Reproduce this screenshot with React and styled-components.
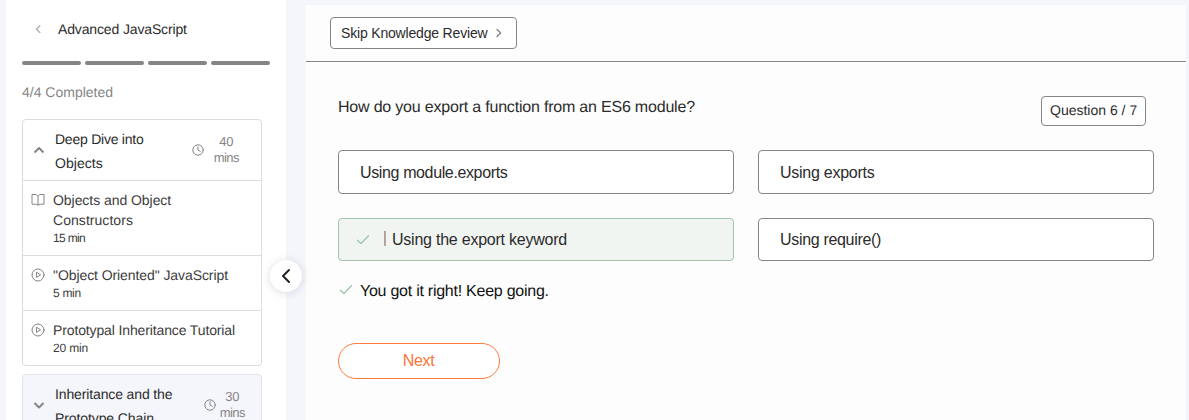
import React from "react";
import styled, { createGlobalStyle, css } from "styled-components";

const GlobalStyle = createGlobalStyle`
  * { box-sizing: border-box; }
  html, body { margin: 0; height: 420px; overflow: hidden; }
  body {
    background: #f5f6fc;
    color: #2b2b2b;
    font-family: "Liberation Sans", Arial, sans-serif;
    text-rendering: geometricPrecision;
  }
  button { font: inherit; color: inherit; cursor: pointer; }
`;

const Page = styled.div`
  display: flex;
  height: 420px;
  padding: 0 3px 0 6px;
  overflow: hidden;
`;

const Sidebar = styled.aside`
  position: relative;
  flex: 0 0 280px;
  height: 420px;
  padding: 0 16px;
  background: #fff;
`;

const Label = styled.span`
  display: block;
  white-space: nowrap;
  letter-spacing: ${(p) => p.$track || 0}px;
`;

const CourseHeader = styled.header`
  display: flex;
  align-items: center;
  height: 61px;
  padding: 0 0 3px 12px;
  gap: 16px;
  font-size: 14px;
`;

const Progress = styled.div`
  display: grid;
  grid-template-columns: repeat(4, 1fr);
  gap: 4px;
`;

const Segment = styled.div`
  height: 4px;
  border-radius: 2px;
  background: #858585;
`;

const Completed = styled.div`
  height: 54px;
  padding-top: 17px;
  font-size: 14px;
  line-height: 20px;
  color: #858585;
`;

const Module = styled.section`
  width: 240px;
  margin-bottom: 8px;
  border: 1px solid ${(p) => (p.$collapsed ? "#e2e3ea" : "#dcdcdf")};
  border-radius: 4px;
  background: ${(p) => (p.$collapsed ? "#f5f6fc" : "#fff")};
`;

const ModuleHeader = styled.div`
  display: flex;
  align-items: center;
  height: 60px;
  padding: 0 ${(p) => p.$right}px 0 10px;
`;

const ModuleTitle = styled.div`
  flex: 1;
  margin-left: 10px;
  padding-top: 2px;
  font-size: 14px;
  line-height: 24px;
`;

const Duration = styled.div`
  display: flex;
  align-items: center;
  gap: ${(p) => p.$gap}px;
  color: #858585;
  font-size: 13px;
  line-height: 16px;
  text-align: center;
`;

const Lesson = styled.div`
  display: flex;
  gap: 8px;
  height: ${(p) => (p.$tall ? 75 : 55)}px;
  padding: 9px 8px 0;
  border-top: 1px solid #dcdcdf;
  font-size: 14px;
  line-height: 20px;
  color: #3c3c3c;
  svg { flex: none; margin-top: 3px; }
`;

const LessonTime = styled(Label)`
  font-size: 12px;
  line-height: 16px;
`;

const CollapseButton = styled.button`
  position: absolute;
  top: 260px;
  left: 264px;
  z-index: 1;
  display: grid;
  place-items: center;
  width: 32px;
  height: 32px;
  padding: 0;
  border: 0;
  border-radius: 50%;
  background: #fff;
  box-shadow: 0 1px 8px rgba(40, 40, 70, 0.16);
`;

const Main = styled.main`
  flex: 1;
  height: 415px;
  margin: 5px 0 0 20px;
  background: #fdfdfd;
`;

const Toolbar = styled.div`
  height: 57px;
  padding: 12px 24px;
  border-bottom: 1px solid #858585;
`;

const SkipButton = styled.button`
  display: flex;
  align-items: center;
  gap: 8px;
  width: 187px;
  height: 32px;
  padding: 0 0 0 10px;
  border: 1px solid #858585;
  border-radius: 4px;
  background: #fff;
  font-size: 14px;
`;

const Quiz = styled.div`
  padding: 34px 32px 0;
`;

const QuestionRow = styled.div`
  display: flex;
  justify-content: space-between;
  align-items: flex-start;
  height: 54px;
  padding-right: 8px;
  font-size: 16px;
  line-height: 24px;
`;

const Counter = styled.div`
  width: 105px;
  height: 30px;
  padding-left: 8px;
  border: 1px solid #858585;
  border-radius: 4px;
  background: #fff;
  font-size: 14px;
  line-height: 27px;
`;

const Answers = styled.div`
  display: grid;
  grid-template-columns: 396px 396px;
  grid-template-rows: 44px 43px;
  gap: 24px;
`;

const Answer = styled.button`
  display: flex;
  align-items: center;
  padding: 1px 21px 0;
  border: 1px solid #858585;
  border-radius: 4px;
  background: #fff;
  font-size: 16px;
  ${(p) =>
    p.$correct &&
    css`
      padding: 0 17px;
      border-color: #a0c3ac;
      background: #f1f5f2;
    `}
`;

const Caret = styled.span`
  width: 2px;
  height: 15px;
  margin: 0 6px 2px 14px;
  background: linear-gradient(90deg, #c99b86 50%, #a5aebd 50%);
`;

const Feedback = styled.div`
  display: flex;
  align-items: center;
  gap: 7px;
  height: 22px;
  margin: 18px 0 42px 1px;
  font-size: 16px;
  color: #111;
  span { padding-top: 3px; }
`;

const NextButton = styled.button`
  display: flex;
  align-items: center;
  justify-content: center;
  width: 162px;
  height: 36px;
  padding: 0 1px 0 0;
  border: 1px solid #ff7a3d;
  border-radius: 18px;
  background: #fff;
  color: #ff7438;
  font-size: 16px;
`;

const Svg = ({ w, h = w, color = "#858585", stroke = 1, children }) => (
  <svg
    width={w}
    height={h}
    viewBox={`0 0 ${w} ${h}`}
    fill="none"
    stroke={color}
    strokeWidth={stroke}
    strokeLinecap="round"
    strokeLinejoin="round"
  >
    {children}
  </svg>
);

const BackIcon = () => (
  <Svg w={8} color="#aaa" stroke={1.2}><path d="M6 .8 2.4 4.3 6 7.8" /></Svg>
);
const ToggleIcon = ({ open }) => (
  <Svg w={12} stroke={2}>
    <path strokeLinecap="butt" d={open ? "M1.5 8.5 6 4 10.5 8.5" : "M1.5 4 6 8.5 10.5 4"} />
  </Svg>
);
const ClockIcon = () => (
  <Svg w={12}>
    <circle cx="6" cy="6" r="5.2" />
    <path d="M6 2.8V6l2.2 1.3" />
  </Svg>
);
const BookIcon = () => (
  <Svg w={14}>
    <path d="M7 3.2C6.4 2 5.3 1.5 4 1.5H1v9.7h3.4c1.3 0 2.2.4 2.6 1.2.4-.8 1.3-1.2 2.6-1.2H13V1.5h-3C8.7 1.5 7.6 2 7 3.2V12" />
  </Svg>
);
const PlayIcon = () => (
  <Svg w={14}>
    <circle cx="7" cy="7" r="6" />
    <path d="M5.5 4.6v4.8L9.3 7z" />
  </Svg>
);
const CheckIcon = () => (
  <Svg w={14} color="#a5c5b0" stroke={1.4}><path d="M1.5 7.3 5 10.6 12.5 2.8" /></Svg>
);

const modules = [
  {
    title: [["Deep Dive into", -0.24], ["Objects", 0.05]],
    mins: "40",
    right: 22,
    gap: 10,
    lessons: [
      { icon: BookIcon, title: [["Objects and Object", -0.05], ["Constructors", 0.05]], time: ["15 min", -0.65] },
      { icon: PlayIcon, title: [['"Object Oriented" JavaScript', -0.08]], time: ["5 min", -0.3] },
      { icon: PlayIcon, title: [["Prototypal Inheritance Tutorial", -0.13]], time: ["20 min", -0.15] },
    ],
  },
  {
    title: [["Inheritance and the", -0.13], ["Prototype Chain", -0.1]],
    mins: "30",
    right: 16,
    gap: 4,
  },
];

const answers = [
  { text: "Using module.exports", track: -0.37 },
  { text: "Using exports", track: -0.26 },
  { text: "Using the export keyword", track: -0.23, correct: true },
  { text: "Using require()", track: -0.32 },
];

export default function App() {
  return (
    <>
      <GlobalStyle />
      <Page>
        <Sidebar>
          <CourseHeader>
            <BackIcon />
            <Label $track={-0.14}>Advanced JavaScript</Label>
          </CourseHeader>
          <Progress>
            {[0, 1, 2, 3].map((n) => <Segment key={n} />)}
          </Progress>
          <Completed><Label>4/4 Completed</Label></Completed>
          {modules.map((m) => (
            <Module key={m.mins} $collapsed={!m.lessons}>
              <ModuleHeader $right={m.right}>
                <ToggleIcon open={!!m.lessons} />
                <ModuleTitle>
                  {m.title.map(([t, s]) => <Label key={t} $track={s}>{t}</Label>)}
                </ModuleTitle>
                <Duration $gap={m.gap}>
                  <ClockIcon />
                  <div>
                    <Label>{m.mins}</Label>
                    <Label $track={-0.55}>mins</Label>
                  </div>
                </Duration>
              </ModuleHeader>
              {m.lessons?.map(({ icon: Icon, title, time }) => (
                <Lesson key={time[0]} $tall={title.length > 1}>
                  <Icon />
                  <div>
                    {title.map(([t, s]) => <Label key={t} $track={s}>{t}</Label>)}
                    <LessonTime $track={time[1]}>{time[0]}</LessonTime>
                  </div>
                </Lesson>
              ))}
            </Module>
          ))}
          <CollapseButton aria-label="Collapse sidebar">
            <Svg w={16} color="#222" stroke={2}><path d="M11 2 5 8l6 6" /></Svg>
          </CollapseButton>
        </Sidebar>
        <Main>
          <Toolbar>
            <SkipButton>
              <Label $track={-0.18}>Skip Knowledge Review</Label>
              <Svg w={8} h={10} stroke={1.4}><path d="M2 1.5 5.6 5 2 8.5" /></Svg>
            </SkipButton>
          </Toolbar>
          <Quiz>
            <QuestionRow>
              <Label $track={-0.2}>How do you export a function from an ES6 module?</Label>
              <Counter><Label>Question 6 / 7</Label></Counter>
            </QuestionRow>
            <Answers>
              {answers.map((a) => (
                <Answer key={a.text} $correct={a.correct}>
                  {a.correct && <><CheckIcon /><Caret /></>}
                  <Label $track={a.track}>{a.text}</Label>
                </Answer>
              ))}
            </Answers>
            <Feedback>
              <CheckIcon />
              <Label $track={-0.25}>You got it right! Keep going.</Label>
            </Feedback>
            <NextButton><Label $track={-0.3}>Next</Label></NextButton>
          </Quiz>
        </Main>
      </Page>
    </>
  );
}
